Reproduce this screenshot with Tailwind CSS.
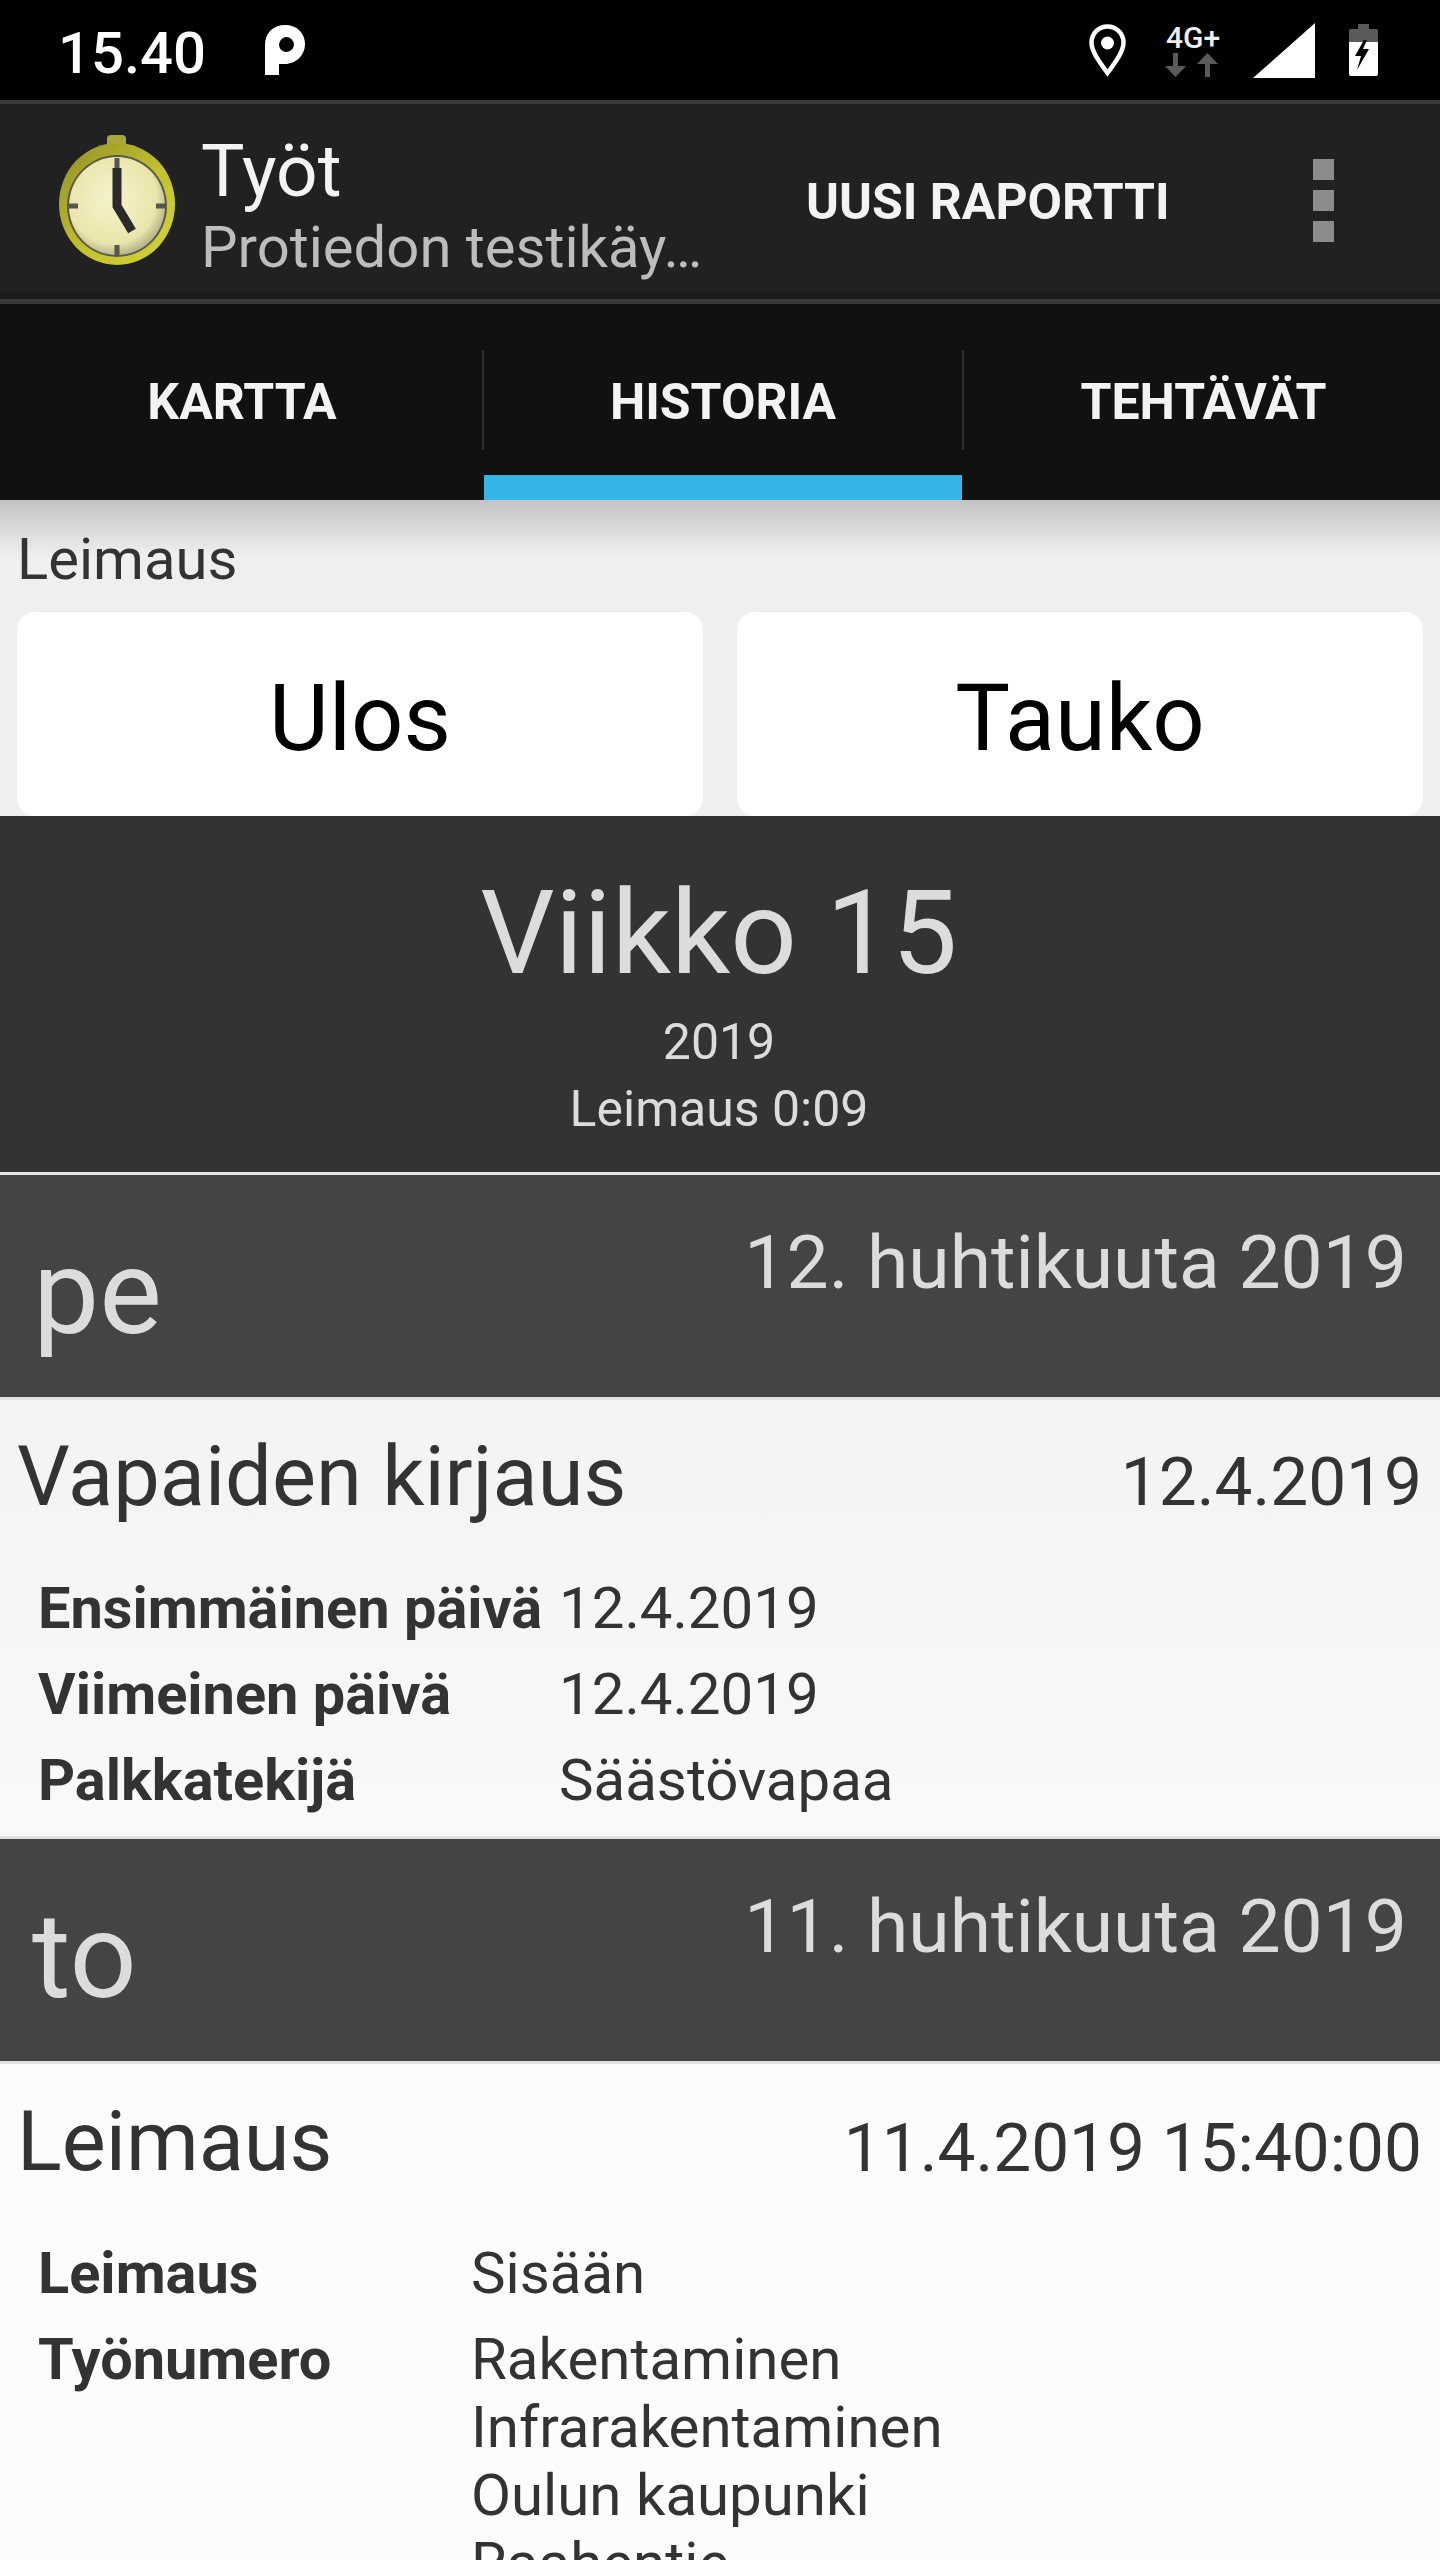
<!DOCTYPE html>
<html><head><meta charset="utf-8"><script src="https://cdn.jsdelivr.net/npm/@tailwindcss/browser@4"></script></head>
<body class="bg-black">
<div class="w-[1440px] h-[2560px] overflow-hidden font-['Roboto',sans-serif] bg-[#fafafa]">
  <!-- status bar -->
  <div class="h-[100px] bg-black flex items-center pl-[58px] pr-[62px] text-white">
    <span class="text-[58px] leading-none font-medium pt-[6px] w-[148px] whitespace-nowrap">15.40</span>
    <svg class="ml-[59px] w-[40px] h-[50px]" viewBox="0 0 40 50"><path fill="#fff" d="M0 50V20C0 8 8 0 20 0s20 8 20 19-9 20-20 20h-6v11zM21 12a8 8 0 0 0-7 8 8 8 0 0 0 7 7 8 8 0 0 0 8-7 8 8 0 0 0-8-8z"/></svg>
    <div class="flex-1"></div>
    <svg class="w-[37px] h-[53px]" viewBox="0 0 37 53"><path fill="none" stroke="#fff" stroke-width="4.5" d="M18.5 49C9 36 2.5 27 2.5 18.5a16 16 0 0 1 32 0C34.500 27 28 36 18.500 49z"/><circle cx="18.500" cy="19" r="6.500" fill="#fff"/></svg>
    <div class="ml-[37px] w-[60px] flex flex-col items-center">
      <span class="text-[30px] leading-[30px] font-medium text-[#eee]">4G+</span>
      <svg class="w-[60px] h-[24px]" viewBox="0 0 60 24"><path fill="#5a5a5a" d="M10 0h5v13h8L12.500 24 2 13h8zM42 24h5V11h8L44.500 0 34 11h8z"/></svg>
    </div>
    <svg class="ml-[30px] w-[62px] h-[55px]" viewBox="0 0 62 55"><path fill="#fff" d="M62 0v55H0z"/></svg>
    <svg class="ml-[34px] w-[29px] h-[52px]" viewBox="0 0 29 52"><path fill="#fff" d="M0 16h29v34a2 2 0 0 1-2 2H2a2 2 0 0 1-2-2z"/><path fill="#5a5a5a" d="M9 0h11v5h7a2 2 0 0 1 2 2v11H0V7a2 2 0 0 1 2-2h7z"/><path fill="#000" d="M15 16l-9 16h6l-4 14 12-21h-6l4-9z"/></svg>
  </div>
  <!-- action bar -->
  <div class="h-[204px] bg-[#212121] border-t-[4px] border-[#3a3a3a] relative flex items-start">
    <svg class="absolute left-[58px] top-[31px] w-[120px] h-[132px]" viewBox="0 0 120 132">
      <defs>
        <radialGradient id="f" cx="45%" cy="42%" r="58%"><stop offset="0" stop-color="#f6f3cd"/><stop offset=".8" stop-color="#eae5ab"/><stop offset="1" stop-color="#b9b68a"/></radialGradient>
        <linearGradient id="r" x1="0" y1="0" x2="1" y2="1"><stop offset="0" stop-color="#8f8e26"/><stop offset=".55" stop-color="#c3c22f"/><stop offset="1" stop-color="#d3d337"/></linearGradient>
      </defs>
      <rect x="49" y="0" width="19" height="14" rx="4" fill="#a8a83a"/>
      <ellipse cx="59" cy="69" rx="58" ry="61" fill="url(#r)"/>
      <ellipse cx="59" cy="71" rx="50" ry="51" fill="#5a5a4c"/>
      <ellipse cx="59" cy="71" rx="48" ry="49" fill="url(#f)"/>
      <path stroke="#55554a" stroke-width="5" d="M59 23v10M59 110v10M11 71h9M98 71h9"/>
      <path stroke="#2a2a2a" stroke-width="9" fill="none" d="M59 33v38l15 25"/>
    </svg>
    <div class="ml-[201px] pt-[30px] flex flex-col">
      <span class="text-[73px] leading-[74px] text-[#f3f3f3]">Työt</span>
      <span class="text-[58px] leading-[72px] mt-[3px] text-[#bdbdbd]">Protiedon testikäy…</span>
    </div>
    <span class="absolute left-[806px] top-[71px] text-[50px] leading-[54px] font-bold text-[#f3f3f3]">UUSI RAPORTTI</span>
    <div class="absolute left-[1313px] top-[55px] flex flex-col gap-[10px]">
      <div class="w-[21px] h-[21px] bg-[#8c8c8c]"></div><div class="w-[21px] h-[21px] bg-[#8c8c8c]"></div><div class="w-[21px] h-[21px] bg-[#8c8c8c]"></div>
    </div>
    <div class="absolute left-0 right-0 bottom-0 h-[12px] bg-[#1c1c1c] border-b-[5px] border-[#383838]"></div>
  </div>
  <!-- tabs -->
  <div class="h-[196px] bg-[#111] flex text-[50px] font-bold text-[#f3f3f3]">
    <div class="w-[484px] flex justify-center pt-[71px] relative"><span class="leading-[54px]">KARTTA</span><div class="absolute right-[0px] top-[46px] w-[2px] h-[100px] bg-[#2e2e2e]"></div></div>
    <div class="w-[478px] flex justify-center pt-[71px] relative border-b-[25px] border-[#33b5e5]"><span class="leading-[54px]">HISTORIA</span><div class="absolute right-[-2px] top-[46px] w-[2px] h-[100px] bg-[#2e2e2e]"></div></div>
    <div class="flex-1 flex justify-center pt-[71px] pl-[5px]"><span class="leading-[54px]">TEHTÄVÄT</span></div>
  </div>
  <!-- stamp -->
  <div class="h-[316px] bg-[#efefef] relative">
    <div class="absolute left-0 right-0 top-0 h-[56px] bg-gradient-to-b from-[#c4c4c4] to-[#efefef]"></div>
    <div class="relative text-[#333] text-[58px] leading-[66px] pt-[26px] h-[112px] pl-[17px]">Leimaus</div>
    <div class="relative flex gap-[34px] pl-[17px]">
      <div class="w-[686px] h-[204px] bg-white rounded-[18px] flex items-center justify-center text-black text-[92px] pt-[10px]">Ulos</div>
      <div class="w-[686px] h-[204px] bg-white rounded-[18px] flex items-center justify-center text-black text-[92px] pt-[10px]">Tauko</div>
    </div>
  </div>
  <!-- week -->
  <div class="h-[356px] bg-[#333] text-center flex flex-col items-center text-[#dcdcdc]">
    <div class="text-[117px] leading-[130px] pt-[52px] box-content -ml-[2px]">Viikko 15</div>
    <div class="text-[50px] leading-[60px] mt-[14px] -ml-[2px]">2019</div>
    <div class="text-[50px] leading-[60px] mt-[7px] -ml-[2px]">Leimaus 0:09</div>
  </div>
  <div class="h-[3px] bg-[#e6e6e6]"></div>
  <!-- day pe -->
  <div class="h-[225px] bg-[#444] flex justify-between items-start text-[#dcdcdc] border-b-[3px] border-[#e0e0e0]">
    <span class="text-[118px] leading-[110px] pl-[33px] pt-[63px]">pe</span>
    <span class="text-[75px] leading-[84px] pr-[33px] pt-[45px]">12. huhtikuuta 2019</span>
  </div>
  <!-- vapaat -->
  <div class="h-[436px] bg-gradient-to-b from-[#f3f3f3] to-[#f9f9f9] text-[#333] pl-[17px] pr-[18px]">
    <div class="flex justify-between items-start pt-[30px] h-[165px]">
      <span class="text-[83px] leading-[94px]">Vapaiden kirjaus</span>
      <span class="text-[67.5px] leading-[80px] pt-[12px]">12.4.2019</span>
    </div>
    <div class="pl-[21px] grid grid-cols-[521px_1fr] text-[58.2px] leading-[86px]">
      <span class="font-bold whitespace-nowrap text-[57.7px]">Ensimmäinen päivä</span><span>12.4.2019</span>
      <span class="font-bold text-[57.7px]">Viimeinen päivä</span><span>12.4.2019</span>
      <span class="font-bold text-[57.7px]">Palkkatekijä</span><span>Säästövapaa</span>
    </div>
  </div>
  <div class="h-[3px] bg-[#e0e0e0]"></div>
  <!-- day to -->
  <div class="h-[225px] bg-[#444] flex justify-between items-start text-[#dcdcdc] border-b-[3px] border-[#e0e0e0]">
    <span class="text-[118px] leading-[120px] pl-[32px] pt-[58px]">to</span>
    <span class="text-[75px] leading-[84px] pr-[33px] pt-[45px]">11. huhtikuuta 2019</span>
  </div>
  <!-- leimaus -->
  <div class="text-[#333] pl-[17px] pr-[18px] bg-[#fcfcfc]">
    <div class="flex justify-between items-start pt-[31px] h-[166px]">
      <span class="text-[83px] leading-[94px]">Leimaus</span>
      <span class="text-[67.5px] leading-[80px] pt-[13px]">11.4.2019 15:40:00</span>
    </div>
    <div class="pl-[21px] grid grid-cols-[433px_1fr] text-[58.2px]">
      <span class="font-bold leading-[86px] text-[57.7px]">Leimaus</span><span class="leading-[86px]">Sisään</span>
      <span class="font-bold leading-[86px] text-[57.7px]">Työnumero</span>
      <div class="leading-[68px] pt-[9px]"><div>Rakentaminen</div><div>Infrarakentaminen</div><div>Oulun kaupunki</div><div>Raahentie</div></div>
    </div>
  </div>
</div>
</body></html>
